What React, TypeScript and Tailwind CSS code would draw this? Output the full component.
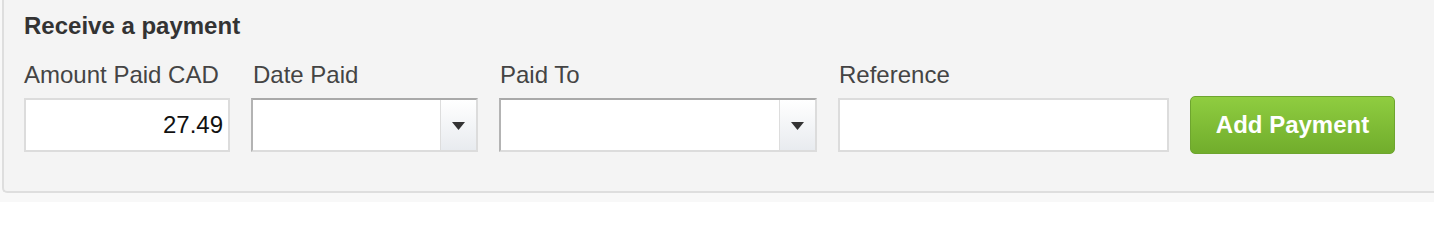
import { useState } from "react";

function SelectBox({ width }: { width: string }) {
  return (
    <div
      className={`flex h-[54px] ${width} border-2 border-t-[#a9a9a9] border-l-[#b3b3b3] border-r-[#dcdcdc] border-b-[#dcdcdc] bg-white`}
    >
      <div className="flex-1" />
      <div className="flex w-[36px] items-center justify-center border-l border-[#dddddd] bg-gradient-to-b from-white to-[#e8ebef]">
        <svg width="13" height="8" viewBox="0 0 13 8" className="mt-[2px]">
          <path d="M0 0 H13 L6.5 8 Z" fill="#333" />
        </svg>
      </div>
    </div>
  );
}

export default function App() {
  const [amount, setAmount] = useState("27.49");
  const [reference, setReference] = useState("");

  return (
    <div
      className="h-[202px] w-full overflow-hidden bg-[#f8f8f8] pl-[2px]"
      style={{ fontFamily: '"Liberation Sans", Arial, sans-serif' }}
    >
      <div className="h-[193px] rounded-bl-[5px] border-b-2 border-l-2 border-[#dedede] bg-[#f4f4f4] pl-[20px] pt-[12px]">
        <h2 className="text-[24px] leading-[28px] font-bold text-[#333]">Receive a payment</h2>

        <div className="mt-[21px] flex items-end gap-[21px]">
          <div className="flex flex-col">
            <label className="text-[24px] leading-[28px] text-[#444]">Amount Paid CAD</label>
            <input
              value={amount}
              onChange={(e) => setAmount(e.target.value)}
              className="mt-[9px] h-[54px] w-[206px] border-2 border-[#dcdcdc] bg-white px-[5px] text-right text-[24px] text-[#111] outline-none"
            />
          </div>

          <div className="flex flex-col">
            <label className="pl-[2px] text-[24px] leading-[28px] text-[#444]">Date Paid</label>
            <div className="mt-[9px]">
              <SelectBox width="w-[227px]" />
            </div>
          </div>

          <div className="flex flex-col">
            <label className="pl-[1px] text-[24px] leading-[28px] text-[#444]">Paid To</label>
            <div className="mt-[9px]">
              <SelectBox width="w-[318px]" />
            </div>
          </div>

          <div className="flex flex-col">
            <label className="pl-[1px] text-[24px] leading-[28px] text-[#444]">Reference</label>
            <input
              value={reference}
              onChange={(e) => setReference(e.target.value)}
              className="mt-[9px] h-[54px] w-[331px] border-2 border-[#dcdcdc] bg-white px-[5px] text-[24px] text-[#111] outline-none"
            />
          </div>

          <button
            type="button"
            className="mb-[-2px] h-[58px] w-[205px] rounded-[5px] border border-[#6ea52f] bg-gradient-to-b from-[#8fcd40] to-[#71ad2c] text-[24px] font-bold text-white"
          >
            Add Payment
          </button>
        </div>
      </div>
    </div>
  );
}
